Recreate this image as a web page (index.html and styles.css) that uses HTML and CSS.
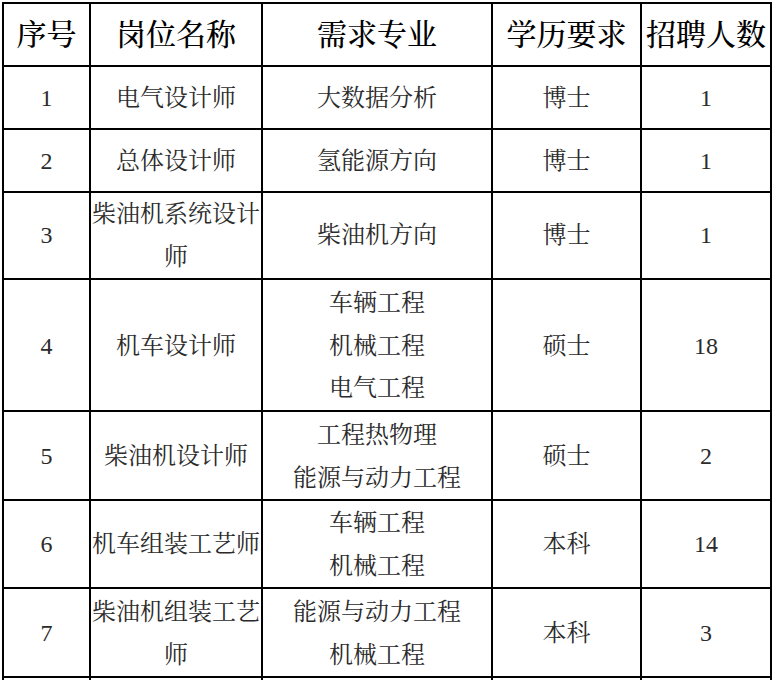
FILE: index.html
```html
<!DOCTYPE html>
<html lang="zh-CN">
<head>
<meta charset="utf-8">
<title>招聘岗位</title>
<link rel="stylesheet" href="styles.css">
</head>
<body>
<table class="jobs">
  <thead>
    <tr class="r-head">
      <th class="c1">序号</th>
      <th class="c2">岗位名称</th>
      <th class="c3">需求专业</th>
      <th class="c4">学历要求</th>
      <th class="c5">招聘人数</th>
    </tr>
  </thead>
  <tbody>
    <tr class="r-63">
      <td>1</td><td>电气设计师</td><td>大数据分析</td><td>博士</td><td>1</td>
    </tr>
    <tr class="r-63">
      <td>2</td><td>总体设计师</td><td>氢能源方向</td><td>博士</td><td>1</td>
    </tr>
    <tr class="r-87">
      <td>3</td><td>柴油机系统设计师</td><td>柴油机方向</td><td>博士</td><td>1</td>
    </tr>
    <tr class="r-132">
      <td>4</td><td>机车设计师</td><td>车辆工程<br>机械工程<br>电气工程</td><td>硕士</td><td>18</td>
    </tr>
    <tr class="r-89">
      <td>5</td><td>柴油机设计师</td><td>工程热物理<br>能源与动力工程</td><td>硕士</td><td>2</td>
    </tr>
    <tr class="r-88">
      <td>6</td><td>机车组装工艺师</td><td>车辆工程<br>机械工程</td><td>本科</td><td>14</td>
    </tr>
    <tr class="r-89">
      <td>7</td><td>柴油机组装工艺师</td><td>能源与动力工程<br>机械工程</td><td>本科</td><td>3</td>
    </tr>
    <tr class="r-63">
      <td></td><td></td><td></td><td></td><td></td>
    </tr>
  </tbody>
</table>
</body>
</html>
```

FILE: styles.css
```css
html, body {
  margin: 0;
  padding: 0;
  background: #ffffff;
}

.jobs {
  margin: 2px 0 0 2px;
  border-spacing: 0;
  border-top: 2px solid #000;
  border-left: 2px solid #000;
  table-layout: fixed;
  width: 770px;
  font-family: "Liberation Serif", "Noto Serif CJK SC", "Noto Sans CJK SC", serif;
}

.jobs th,
.jobs td {
  box-sizing: border-box;
  padding: 0;
  border-right: 2px solid #000;
  border-bottom: 2px solid #000;
  text-align: center;
  vertical-align: middle;
}

.jobs th {
  font-size: 30px;
  font-weight: 500;
  color: #000;
  line-height: 40px;
}

.jobs td {
  padding-top: 2px;
  font-size: 24px;
  font-weight: 400;
  color: #2b2b2b;
  line-height: 42.5px;
}

.c1 { width: 87px; }
.c2 { width: 172px; }
.c3 { width: 230px; }
.c4 { width: 149px; }
.c5 { width: 130px; }

.r-head th { height: 63px; }
.r-63 td { height: 63px; }
.r-87 td { height: 87px; padding-top: 0; }
.r-88 td { height: 88px; padding-top: 1px; }
.r-89 td { height: 89px; }
.r-132 td { height: 132px; }
```
